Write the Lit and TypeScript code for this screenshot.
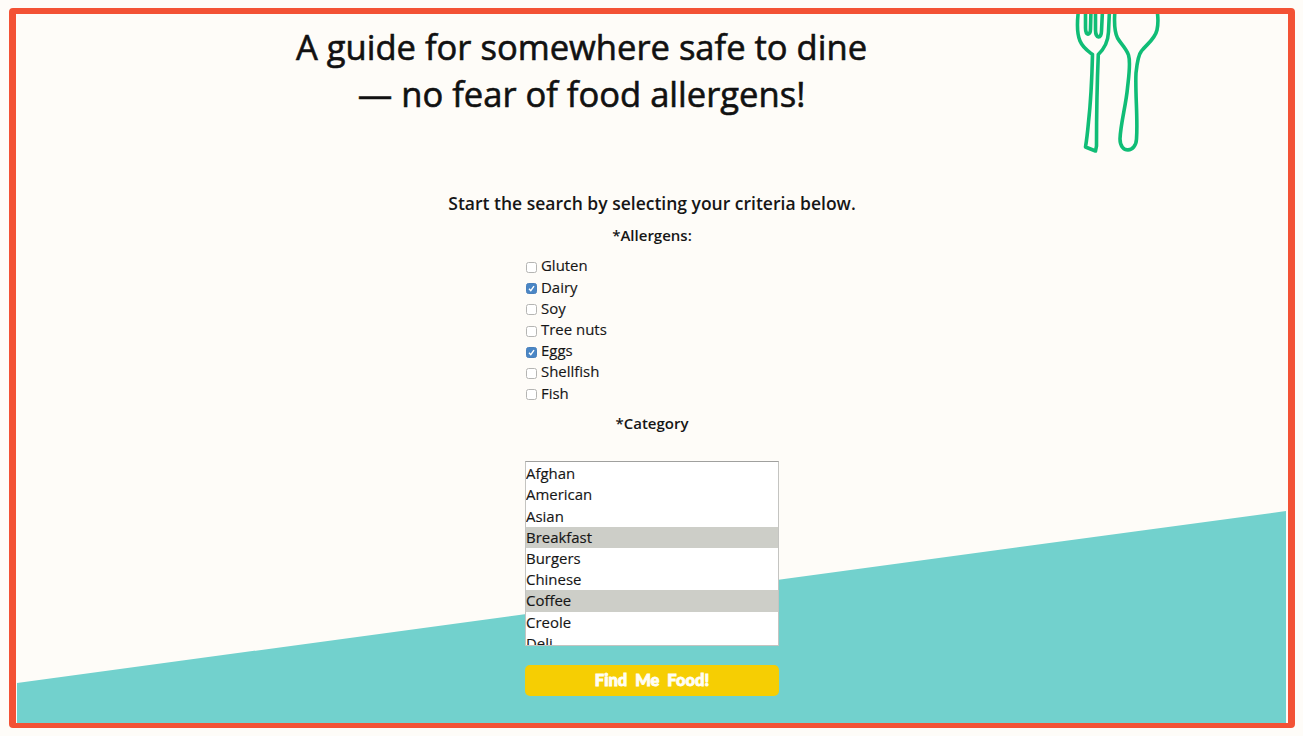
import { LitElement, html, css } from "lit";
import { customElement, state } from "lit/decorators.js";
import { classMap } from "lit/directives/class-map.js";

@customElement("app-root")
export class AppRoot extends LitElement {
  static styles = css`
    :host {
      display: block;
      box-sizing: border-box;
      width: 1303px;
      height: 736px;
      padding: 8px 8px 8px 9px;
      overflow: hidden;
      background: #fefcf8;
      color: #161616;
      font-family: "Open Sans", "Noto Sans", sans-serif;
    }
    * { box-sizing: border-box; }
    .frame {
      position: relative;
      width: 1286px;
      height: 720px;
      border: solid #f35235;
      border-width: 6px 7px 5px 7px;
      border-radius: 4px;
      overflow: hidden;
    }
    .slope {
      position: absolute;
      left: 1px;
      bottom: 0;
      width: 1269px;
      height: 213px;
      display: block;
    }
    .cutlery {
      position: absolute;
      left: 1044px;
      top: 0;
      display: block;
    }
    .page {
      position: relative;
      display: flex;
      flex-direction: column;
      align-items: center;
    }
    h1 {
      margin: 10px 141px 0 0;
      font-size: 34.55px;
      font-weight: 400;
      line-height: 46.5px;
      text-align: center;
      white-space: nowrap;
      color: #111;
      -webkit-text-stroke: 0.6px #111;
    }
    h2 {
      margin: 74px 0 0;
      font-size: 17.5px;
      font-weight: 600;
      line-height: 24px;
      white-space: nowrap;
    }
    h3 {
      margin: 0;
      font-size: 15px;
      font-weight: 600;
      line-height: 22px;
    }
    .allergens { margin-top: 9px; }
    .category { margin-top: 8.6px; }
    .form { width: 254px; }
    .checks { margin-top: 9.4px; padding-left: 1px; }
    .check {
      display: flex;
      align-items: center;
      gap: 4px;
      height: 21.2px;
      font-size: 14.95px;
      line-height: 21.2px;
      -webkit-text-stroke: 0.15px #161616;
    }
    .box {
      width: 11px;
      height: 11px;
      margin-top: 3px;
      border: 1px solid #b5b5b3;
      border-radius: 2.5px;
      background: #fff;
      display: block;
    }
    .box.on { background: #4a86c5; border-color: #4a80bb; }
    .box svg { display: block; width: 9px; height: 9px; }
    .list {
      margin-top: 27px;
      height: 185px;
      padding-top: 1px;
      border: 1px solid #c4c4c1;
      border-top-color: #a0a09e;
      background: #fff;
      overflow: hidden;
      font-size: 14.95px;
      -webkit-text-stroke: 0.15px #161616;
    }
    .option { height: 21.2px; line-height: 21.2px; }
    .option.on { background: #cdcec8; }
    .go {
      display: block;
      width: 254px;
      height: 31px;
      margin-top: 19px;
      padding: 0;
      border: 0;
      border-radius: 5px;
      background: #f6ce03;
      color: #fffef4;
      font: 900 16.5px/31px Lato, sans-serif;
      word-spacing: 4px;
      -webkit-text-stroke: 0.9px #fffef4;
    }
  `;

  @state() private allergens = [
    { name: "Gluten", on: false },
    { name: "Dairy", on: true },
    { name: "Soy", on: false },
    { name: "Tree nuts", on: false },
    { name: "Eggs", on: true },
    { name: "Shellfish", on: false },
    { name: "Fish", on: false },
  ];

  @state() private categories = [
    "Afghan", "American", "Asian", "Breakfast", "Burgers",
    "Chinese", "Coffee", "Creole", "Deli",
  ];

  @state() private chosen = ["Breakfast", "Coffee"];

  render() {
    return html`
      <div class="frame">
        <svg class="slope" viewBox="0 0 1270 213" preserveAspectRatio="none">
          <path d="M0 173L1270 1V213H0Z" fill="#72d1cd" />
        </svg>
        <svg class="cutlery" width="110" height="145" viewBox="1060 14 110 145"
          fill="none" stroke="#10bd76" stroke-width="3.6" stroke-linejoin="round" stroke-linecap="round">
          <path d="M1078.500 10C1077 22 1077 34 1080 41C1083 48 1088 51 1092.500 54.500C1092 75 1091 100 1088.500 122C1087.500 133 1086.500 141 1085.500 147L1095.500 151L1096.500 146C1096.500 120 1097 85 1098.300 54.500C1104 49 1108 43 1108.500 32L1109.500 10" />
          <path d="M1085.500 10L1085.500 28C1085.500 36 1090.500 36 1090.500 29L1091 10" />
          <path d="M1095.500 10L1095.500 30C1095.500 39 1101.500 39 1101.500 31L1102.500 10" />
          <path d="M1115 10C1114 22 1114 31 1117.500 38C1121 44 1126 48 1128.500 55C1131 63 1128.500 78 1127.500 88C1126 105 1120.500 124 1120 139C1120 154 1136 153 1136.500 139C1138 118 1135 93 1136 73C1137 63 1138 55 1141.500 51C1147 44 1155 39 1157 30C1158.500 23 1158 16 1157 10" />
        </svg>
        <div class="page">
          <h1>A guide for somewhere safe to dine<br />— no fear of food allergens!</h1>
          <h2>Start the search by selecting your criteria below.</h2>
          <h3 class="allergens">*Allergens:</h3>
          <div class="form checks">
            ${this.allergens.map((a) => html`
              <div class="check">
                <span class=${classMap({ box: true, on: a.on })}>
                  ${a.on ? html`<svg viewBox="0 0 9 9"><path d="M2 4.800L3.800 6.700L7 2.200" fill="none" stroke="#fff" stroke-width="1.400" /></svg>` : ""}
                </span>
                <span>${a.name}</span>
              </div>`)}
          </div>
          <h3 class="category">*Category</h3>
          <div class="form list">
            ${this.categories.map((c) => html`
              <div class=${classMap({ option: true, on: this.chosen.includes(c) })}>${c}</div>`)}
          </div>
          <button class="go">Find Me Food!</button>
        </div>
      </div>`;
  }
}
